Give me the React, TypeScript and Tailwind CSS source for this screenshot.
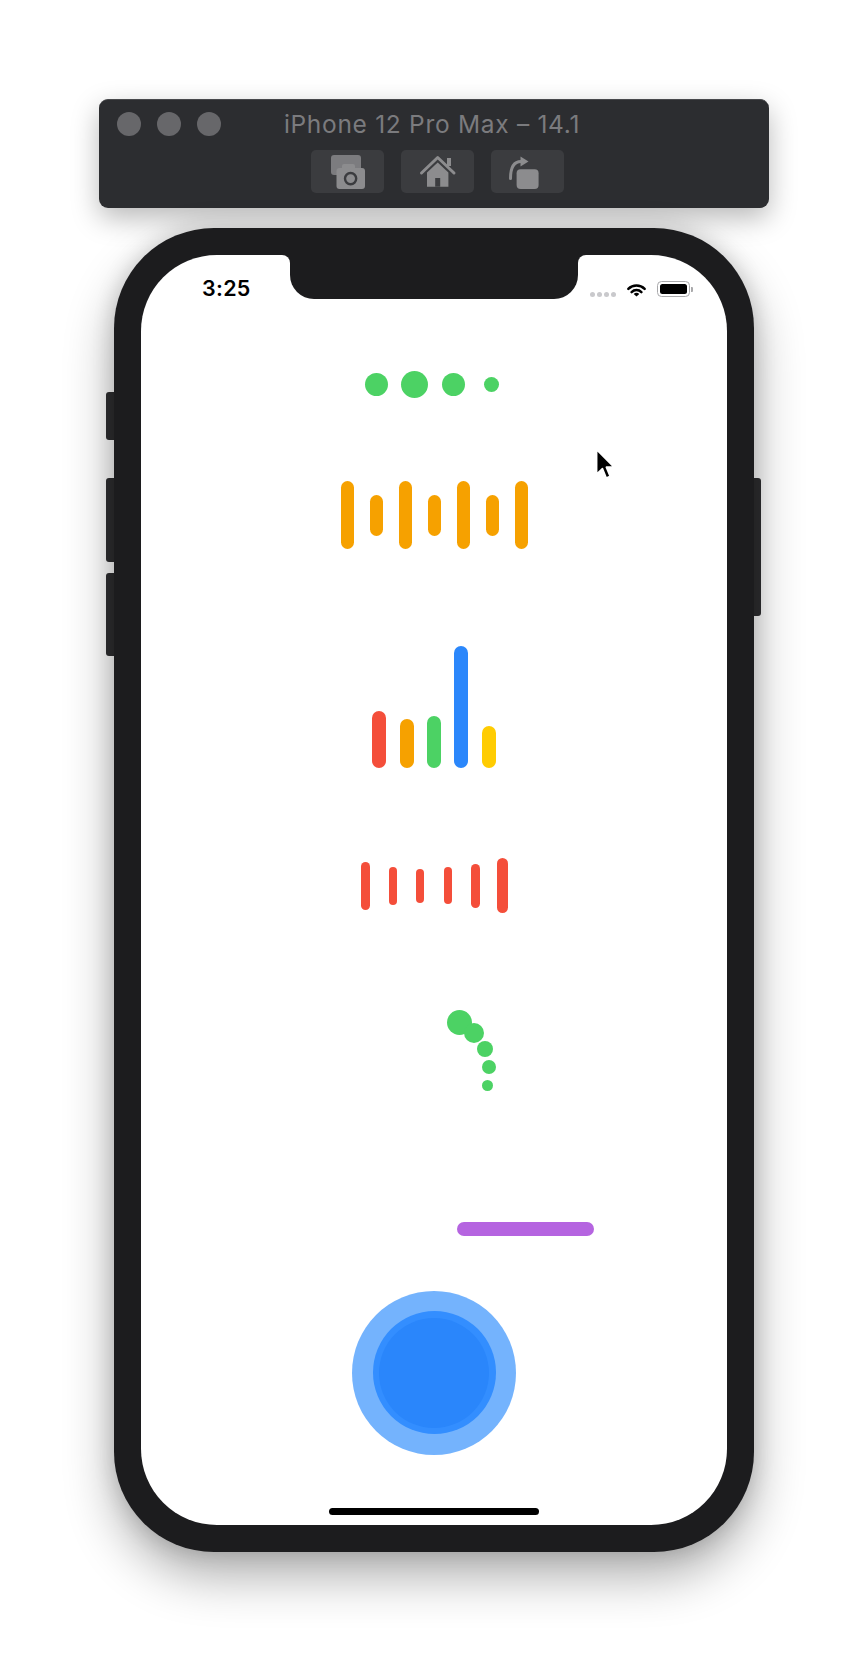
import React from "react";

const ICON = "#8c8c8e";
const BTN = "#3b3c3f";

function ScreenshotIcon() {
  return (
    <svg width="73" height="43" viewBox="0 0 73 43">
      <rect x="20" y="5" width="30" height="20" rx="3" fill="#7c7c7f" />
      <rect x="31" y="14" width="13" height="6" rx="2" fill={ICON} />
      <rect x="25.5" y="18" width="28.5" height="21" rx="3" fill={ICON} />
      <circle cx="39.6" cy="28.6" r="5.6" fill="none" stroke={BTN} strokeWidth="2.4" />
    </svg>
  );
}

function HomeIcon() {
  return (
    <svg width="73" height="43" viewBox="0 0 73 43">
      <path d="M20.5 23 L36.7 7.5 L53 23" fill="none" stroke={ICON} strokeWidth="3" strokeLinecap="round" strokeLinejoin="round" />
      <rect x="46" y="8" width="4" height="8" fill={ICON} />
      <path d="M26 36.7 L26 22.5 L36.7 12.5 L47.4 22.5 L47.4 36.7 Z" fill={ICON} />
      <rect x="34.2" y="28" width="5" height="8.7" fill={BTN} />
    </svg>
  );
}

function RotateIcon() {
  return (
    <svg width="73" height="43" viewBox="0 0 73 43">
      <rect x="25.6" y="19.3" width="22" height="19.7" rx="4" fill={ICON} />
      <path d="M19.5 28.5 Q19.5 11.5 30 11.5" fill="none" stroke={ICON} strokeWidth="3" strokeLinecap="round" />
      <path d="M29.5 6.5 L37.5 11.5 L29.5 16.5 Z" fill={ICON} strokeLinejoin="round" />
    </svg>
  );
}

function TitleBar() {
  return (
    <div className="mt-[99px] w-[670px] h-[109px] rounded-[9px] bg-[#2c2d30] border-t border-[#48494c] shadow-[0_10px_28px_rgba(0,0,0,0.28)] flex flex-col">
      <div className="h-[48px] grid grid-cols-[1fr_auto_1fr] items-center">
        <div className="flex gap-[16px] pl-[18px]">
          <span className="w-[24px] h-[24px] rounded-full bg-[#67676a]" />
          <span className="w-[24px] h-[24px] rounded-full bg-[#67676a]" />
          <span className="w-[24px] h-[24px] rounded-full bg-[#67676a]" />
        </div>
        <div className="text-[24.5px] leading-none text-[#7b7b7e] tracking-[0.7px] pr-[4px]">
          iPhone 12 Pro Max – 14.1
        </div>
        <div />
      </div>
      <div className="mt-[2px] flex justify-center gap-[17px] pl-[7px]">
        <div className="w-[73px] h-[43px] rounded-[5px] bg-[#3b3c3f]">
          <ScreenshotIcon />
        </div>
        <div className="w-[73px] h-[43px] rounded-[5px] bg-[#3b3c3f]">
          <HomeIcon />
        </div>
        <div className="w-[73px] h-[43px] rounded-[5px] bg-[#3b3c3f]">
          <RotateIcon />
        </div>
      </div>
    </div>
  );
}

function Wifi() {
  return (
    <svg width="21" height="15" viewBox="0 0 18 13">
      <path d="M1.93 5.93 A10 10 0 0 1 16.07 5.93" fill="none" stroke="#000" strokeWidth="2.2" strokeLinecap="round" />
      <path d="M4.76 8.76 A6 6 0 0 1 13.24 8.76" fill="none" stroke="#000" strokeWidth="2.2" strokeLinecap="round" />
      <path d="M9 12.6 L6.6 10.4 A3.3 3.3 0 0 1 11.4 10.4 Z" fill="#000" />
    </svg>
  );
}

function Battery() {
  return (
    <div className="flex items-center">
      <div className="w-[33px] h-[16px] rounded-[4.5px] border border-[#a9a9ab] p-[2px]">
        <div className="w-full h-full rounded-[2.5px] bg-black" />
      </div>
      <div className="ml-[1px] w-[2px] h-[5px] rounded-r-[1px] bg-[#a9a9ab]" />
    </div>
  );
}

function StatusBar() {
  return (
    <div className="h-[68px] flex items-center justify-between pl-[61px] pr-[34px]">
      <div className="text-[21.5px] font-semibold text-black leading-none tracking-[0.3px]">3:25</div>
      <div className="flex items-center">
        <div className="flex gap-[2px] mt-[10px]">
          <span className="w-[5px] h-[5px] rounded-full bg-[#c9c9cc]" />
          <span className="w-[5px] h-[5px] rounded-full bg-[#c9c9cc]" />
          <span className="w-[5px] h-[5px] rounded-full bg-[#c9c9cc]" />
          <span className="w-[5px] h-[5px] rounded-full bg-[#c9c9cc]" />
        </div>
        <div className="ml-[10px] flex items-center">
          <Wifi />
        </div>
        <div className="ml-[10px]">
          <Battery />
        </div>
      </div>
    </div>
  );
}

const GREEN = "bg-[#4cd264]";

function Content() {
  const redBars = [
    { w: 9.3, h: 48 },
    { w: 8, h: 38 },
    { w: 8, h: 34 },
    { w: 7.7, h: 36.7 },
    { w: 9, h: 44 },
    { w: 11, h: 54.7 },
  ];
  return (
    <div className="flex flex-col items-center">
      {/* bouncing dots */}
      <div className="mt-[48px] h-[27px] flex items-center">
        <div className="w-[38.4px] flex justify-center"><span className={`w-[23px] h-[23px] rounded-full ${GREEN}`} /></div>
        <div className="w-[38.4px] flex justify-center"><span className={`w-[27px] h-[27px] rounded-full ${GREEN}`} /></div>
        <div className="w-[38.4px] flex justify-center"><span className={`w-[23px] h-[23px] rounded-full ${GREEN}`} /></div>
        <div className="w-[38.4px] flex justify-center"><span className={`w-[15px] h-[15px] rounded-full ${GREEN}`} /></div>
      </div>

      {/* orange bars */}
      <div className="mt-[83px] h-[68px] flex items-center gap-[16px]">
        <span className="w-[13px] h-[68px] rounded-full bg-[#f6a100]" />
        <span className="w-[13px] h-[41px] rounded-full bg-[#f6a100]" />
        <span className="w-[13px] h-[68px] rounded-full bg-[#f6a100]" />
        <span className="w-[13px] h-[41px] rounded-full bg-[#f6a100]" />
        <span className="w-[13px] h-[68px] rounded-full bg-[#f6a100]" />
        <span className="w-[13px] h-[41px] rounded-full bg-[#f6a100]" />
        <span className="w-[13px] h-[68px] rounded-full bg-[#f6a100]" />
      </div>

      {/* colored equalizer */}
      <div className="mt-[97px] h-[122.3px] flex items-end gap-[13.4px]">
        <span className="w-[14px] h-[57.3px] rounded-full bg-[#f44e3a]" />
        <span className="w-[14px] h-[49.3px] rounded-full bg-[#f6a100]" />
        <span className="w-[14px] h-[52.6px] rounded-full bg-[#4cd264]" />
        <span className="w-[14px] h-[122.3px] rounded-full bg-[#2b87fb]" />
        <span className="w-[14px] h-[42.6px] rounded-full bg-[#ffcc02]" />
      </div>

      {/* red pulse bars */}
      <div className="mt-[90px] h-[55px] flex items-center">
        {redBars.map((b, i) => (
          <div key={i} className="w-[27.35px] flex justify-center">
            <span className="rounded-full bg-[#f44e3a]" style={{ width: b.w, height: b.h }} />
          </div>
        ))}
      </div>

      {/* spinning trail dots */}
      <div className="relative mt-[96.4px] w-[586px] h-[82px]">
        <span className={`absolute left-[305.6px] top-[0px] w-[25.4px] h-[25.4px] rounded-full ${GREEN}`} />
        <span className={`absolute left-[323.3px] top-[13.7px] w-[20px] h-[20px] rounded-full ${GREEN}`} />
        <span className={`absolute left-[335.7px] top-[31.4px] w-[16px] h-[16px] rounded-full ${GREEN}`} />
        <span className={`absolute left-[341.3px] top-[50.1px] w-[14px] h-[14px] rounded-full ${GREEN}`} />
        <span className={`absolute left-[341px] top-[70px] w-[11.4px] h-[11.4px] rounded-full ${GREEN}`} />
      </div>

      {/* progress bar */}
      <div className="mt-[130.7px] self-start ml-[316.3px] w-[136.7px] h-[13.4px] rounded-full bg-[#b564e0]" />

      {/* pulsing circle */}
      <div className="mt-[55px] w-[164px] h-[164px] rounded-full bg-[#74b3fd] flex items-center justify-center">
        <div className="w-[123px] h-[123px] rounded-full bg-[#338eff] flex items-center justify-center">
          <div className="w-[110px] h-[110px] rounded-full bg-[#2a86fb]" />
        </div>
      </div>

      {/* home indicator */}
      <div className="mt-[53.6px] w-[210px] h-[7px] rounded-full bg-black" />
    </div>
  );
}

function Phone() {
  return (
    <div className="relative mt-[20px] w-[640px] h-[1324px]">
      <div className="absolute left-[-8px] top-[164px] w-[10px] h-[48px] rounded-l-[3px] bg-[#2f2f31]" />
      <div className="absolute left-[-8px] top-[250px] w-[10px] h-[84px] rounded-l-[3px] bg-[#2f2f31]" />
      <div className="absolute left-[-8px] top-[345px] w-[10px] h-[83px] rounded-l-[3px] bg-[#2f2f31]" />
      <div className="absolute left-[637px] top-[250px] w-[10px] h-[138px] rounded-r-[3px] bg-[#2f2f31]" />
      <div className="relative w-full h-full rounded-[100px] bg-[#1c1c1e] p-[27px] shadow-[0_24px_50px_rgba(0,0,0,0.32),0_0_22px_rgba(0,0,0,0.16)]">
        <div className="relative w-full h-full rounded-[76px] bg-white overflow-hidden flex flex-col">
          {/* notch */}
          <div className="absolute top-0 left-[149px] w-[288px] h-[44px] rounded-b-[24px] bg-[#1c1c1e]" />
          <div className="absolute top-0 left-[141px] w-[8px] h-[8px] bg-[#1c1c1e]">
            <div className="w-full h-full bg-white rounded-tr-[8px]" />
          </div>
          <div className="absolute top-0 left-[437px] w-[8px] h-[8px] bg-[#1c1c1e]">
            <div className="w-full h-full bg-white rounded-tl-[8px]" />
          </div>
          <StatusBar />
          <Content />
        </div>
      </div>
    </div>
  );
}

function Cursor() {
  return (
    <svg className="absolute left-[595px] top-[448px]" width="21" height="33" viewBox="0 0 13 20.5">
      <path
        d="M1 1 L1 16.2 L4.6 12.8 L7 18.6 L9.4 17.6 L7 11.9 L11.8 11.9 Z"
        fill="#000"
        stroke="#fff"
        strokeWidth="1"
        strokeLinejoin="round"
      />
    </svg>
  );
}

export default function App() {
  return (
    <div className="relative w-[868px] h-[1654px] bg-white overflow-hidden flex flex-col items-center font-['Inter','Liberation_Sans',sans-serif]">
      <TitleBar />
      <Phone />
      <Cursor />
    </div>
  );
}
